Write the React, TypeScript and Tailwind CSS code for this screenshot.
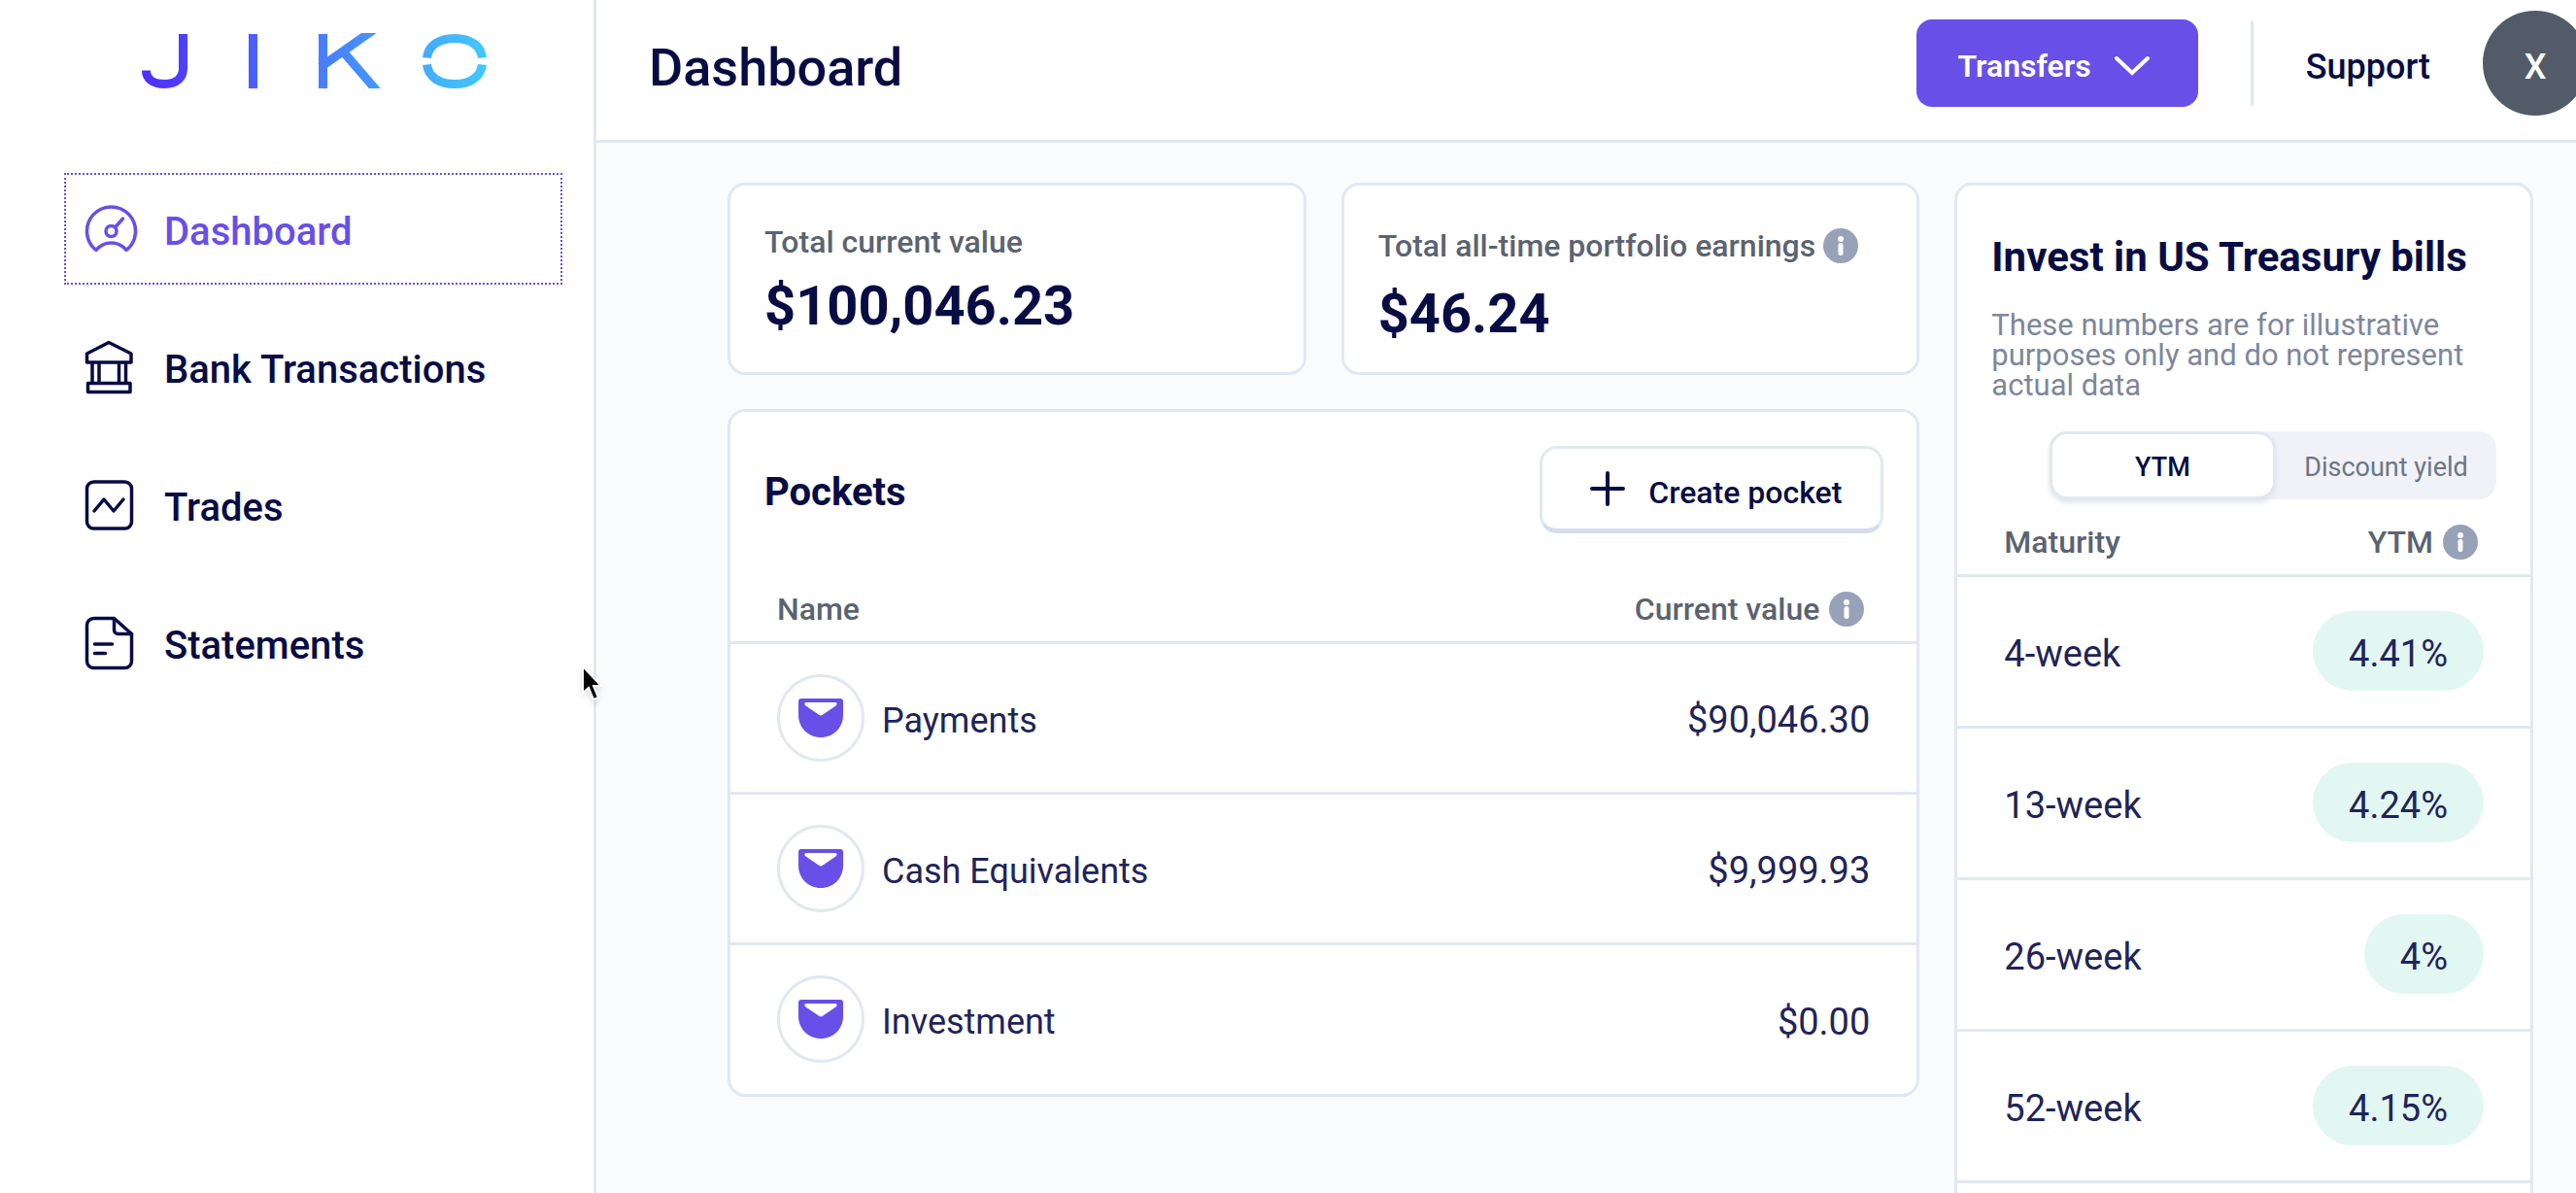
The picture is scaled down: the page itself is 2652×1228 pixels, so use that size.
import React, { useState } from 'react';
import clsx from 'clsx';

interface IconProps {
  className?: string;
}

interface NavItem {
  label: string;
  icon: React.FC<IconProps>;
}

const JikoLogo: React.FC<IconProps> = ({ className }) => (
  <svg viewBox="0 0 356 57" fill="none" className={className} role="img" aria-label="Jiko">
    <defs>
      <linearGradient id="jiko" x1="0" y1="0" x2="356" y2="0" gradientUnits="userSpaceOnUse">
        <stop stopColor="#4f2dff" />
        <stop offset="1" stopColor="#42c8ff" />
      </linearGradient>
    </defs>
    <g stroke="url(#jiko)" strokeWidth="9">
      <path d="M42.5 1v35c0 10.5-7 16.5-19 16.5S4.5 47 4.5 38.5" />
      <path d="M114.5 1v56" />
      <path d="M186.5 1v56M184 35 241-5M208 20l37 43" />
      <path d="M293.5 25.5C295 13 306 5.5 322 5.5S349 13 350.5 25.5M293.5 32.5C295 45 306 52.5 322 52.5S349 45 350.5 32.5" />
    </g>
  </svg>
);

const GaugeIcon: React.FC<IconProps> = ({ className }) => (
  <svg viewBox="0 0 56 56" fill="none" stroke="currentColor" strokeWidth="3.5" strokeLinecap="round" strokeLinejoin="round" className={className}>
    <path d="M13 49.5A25 25 0 1 1 44 49.5C40 44.5 34.5 42 28.5 42S17 44.5 13 49.5Z" />
    <circle cx="28.5" cy="30" r="5.5" />
    <path d="m32.5 26 8-9" />
  </svg>
);

const BankIcon: React.FC<IconProps> = ({ className }) => (
  <svg viewBox="0 0 56 56" fill="none" stroke="currentColor" strokeWidth="3.5" strokeLinejoin="round" className={className}>
    <path d="M3.5 14 26 2.5 49 14v9H3.5zM4.500 44.5H48v9H4.5zM9 23v21M16 23v21M36.5 23v21M43.5 23v21" />
  </svg>
);

const TradesIcon: React.FC<IconProps> = ({ className }) => (
  <svg viewBox="0 0 56 56" fill="none" stroke="currentColor" strokeWidth="3.5" strokeLinecap="round" strokeLinejoin="round" className={className}>
    <rect x="3.5" y="4" width="46" height="48" rx="7" />
    <path d="m11 34 10-12 10 12 10-12" />
  </svg>
);

const StatementIcon: React.FC<IconProps> = ({ className }) => (
  <svg viewBox="0 0 56 56" fill="none" stroke="currentColor" strokeWidth="3.5" strokeLinecap="round" strokeLinejoin="round" className={className}>
    <path d="M10.5 2.5h21l18 16v28a7 7 0 0 1-7 7h-32a7 7 0 0 1-7-7v-37a7 7 0 0 1 7-7Z" />
    <path d="M31.5 2.5v12a4 4 0 0 0 4 4h14M11.5 29h18M11.5 38.5h11" />
  </svg>
);

const PocketIcon: React.FC<IconProps> = ({ className }) => (
  <svg viewBox="0 0 46 40" className={className}>
    <path fill="#684fe8" d="M3 0h40a3 3 0 0 1 3 3v14c0 13-10 23-23 23S0 30 0 17V3a3 3 0 0 1 3-3Z" />
    <path fill="#fff" d="M8 4h30c2 0 2 2.5.5 3.5L24.5 17a3 3 0 0 1-3 0L7.5 7.5C6 6.5 6 4 8 4Z" />
  </svg>
);

const InfoButton = ({ label }: { label: string }) => (
  <button type="button" aria-label={label} className="shrink-0">
    <svg viewBox="0 0 36 36" className="size-9">
      <circle cx="18" cy="18" r="18" fill="#97a1b7" />
      <circle cx="18" cy="11" r="3" fill="#fff" />
      <path d="M18 17.5v8" stroke="#fff" strokeWidth="5" strokeLinecap="round" />
    </svg>
  </button>
);

const navItems: NavItem[] = [
  { label: 'Dashboard', icon: GaugeIcon },
  { label: 'Bank Transactions', icon: BankIcon },
  { label: 'Trades', icon: TradesIcon },
  { label: 'Statements', icon: StatementIcon },
];

const pockets = [
  { name: 'Payments', value: '$90,046.30' },
  { name: 'Cash Equivalents', value: '$9,999.93' },
  { name: 'Investment', value: '$0.00' },
];

const bills = [
  { maturity: '4-week', rate: '4.41%' },
  { maturity: '13-week', rate: '4.24%' },
  { maturity: '26-week', rate: '4%' },
  { maturity: '52-week', rate: '4.15%' },
];

const cardClass = 'rounded-[18px] border-3 border-[#e2e8f0] bg-white';

const Sidebar = () => (
  <aside className="w-[614px] shrink-0 border-r-3 border-[#e2e8f0] bg-white pt-[34px] pr-8 pl-[66px]">
    <JikoLogo className="ml-20 h-[57px] w-[356px]" />
    <nav className="mt-[87px] flex flex-col gap-[27px]">
      {navItems.map(({ label, icon: Icon }, index) => (
        <a
          key={label}
          href="#"
          aria-current={index === 0 ? 'page' : undefined}
          className={clsx(
            'flex h-[115px] items-center gap-[27px] border-2 border-dotted pl-[18px] text-[40px] font-medium',
            index === 0 ? 'border-[#684fe8] text-[#684fe8]' : 'border-transparent text-[#080c44]'
          )}
        >
          <Icon className="size-14 shrink-0" />
          <span className="pt-1.5">{label}</span>
        </a>
      ))}
    </nav>
  </aside>
);

const Header = () => (
  <header className="flex h-[147px] items-center justify-between overflow-hidden border-b-3 border-[#e2e8f0] bg-white pb-3.5 pl-[54px]">
    <h1 className="pt-2 text-[54px] font-medium">Dashboard</h1>
    <div className="-mr-3 flex items-center">
      <button
        type="button"
        className="flex h-[90px] items-center gap-6 rounded-2xl bg-[#684fe8] pt-1.5 pr-[50px] pl-[42px] text-[32px] font-semibold text-white"
      >
        Transfers
        <svg viewBox="0 0 36 20" fill="none" className="h-5 w-9">
          <path d="m2 2 16 15L34 2" stroke="#fff" strokeWidth="4" strokeLinecap="round" />
        </svg>
      </button>
      <div className="ml-[54px] h-[88px] w-[3px] bg-[#e2e8f0]" />
      <a href="#" className="ml-[54px] pt-2 text-[36px] font-medium">
        Support
      </a>
      <button
        type="button"
        aria-label="Account"
        className="ml-[54px] flex size-[108px] items-center justify-center rounded-full bg-[#545b68] pt-2 text-[36px] font-medium text-white"
      >
        X
      </button>
    </div>
  </header>
);

const PocketsCard = () => (
  <section className={clsx(cardClass, 'col-span-2')}>
    <div className="flex items-center justify-between pt-[35px] pr-[34px] pl-[35px]">
      <h2 className="pt-1.5 text-[40px] font-bold">Pockets</h2>
      <button
        type="button"
        className="flex h-[90px] items-center gap-6 rounded-[18px] border-3 border-b-5 border-[#e2e8f0] border-b-[#d5dceb] pr-10 pl-[49px] text-[32px] font-medium"
      >
        <svg viewBox="0 0 36 36" className="size-9">
          <path d="M18 2v32M2 18h32" stroke="currentColor" strokeWidth="4" strokeLinecap="round" />
        </svg>
        <span className="pt-2">Create pocket</span>
      </button>
    </div>
    <table className="mt-10 w-full text-left">
      <thead className="text-[32px] text-[#5b6371]">
        <tr className="h-[72px] border-b-3 border-[#e2e8f0]">
          <th className="pt-1.5 pl-12 font-medium">Name</th>
          <th className="pt-1.5 pr-[54px] font-medium">
            <div className="flex items-center justify-end gap-2.5">
              Current value
              <InfoButton label="About current value" />
            </div>
          </th>
        </tr>
      </thead>
      <tbody className="text-[36px] text-[#1f2459]">
        {pockets.map((pocket) => (
          <tr key={pocket.name} className="h-[155px] border-b-3 border-[#e2e8f0] last:border-b-0">
            <td className="pl-12">
              <div className="flex items-center gap-[18px]">
                <span className="flex size-[90px] items-center justify-center rounded-full border-3 border-[#e2e8f0]">
                  <PocketIcon className="h-10 w-[46px]" />
                </span>
                <span className="pt-1.5">{pocket.name}</span>
              </div>
            </td>
            <td className="pt-1.5 pr-12 text-right text-[38px]">{pocket.value}</td>
          </tr>
        ))}
      </tbody>
    </table>
  </section>
);

const TreasuryCard = () => {
  const [mode, setMode] = useState('YTM');

  return (
    <section className={clsx(cardClass, 'row-span-2 pb-9')}>
      <div className="px-[35px] pt-12">
        <h2 className="text-[42px] leading-[52px] font-bold">Invest in US Treasury bills</h2>
        <p className="mt-7 text-[31px] leading-[31px] text-[#7e879b]">
          These numbers are for illustrative purposes only and do not represent actual data
        </p>
        <div className="mt-8 ml-auto flex h-[70px] w-[460px] rounded-[18px] bg-[#f0f2f8] text-[27px] text-[#6d7584]">
          {['YTM', 'Discount yield'].map((option) => (
            <button
              key={option}
              type="button"
              aria-pressed={mode === option}
              onClick={() => setMode(option)}
              className={clsx(
                'flex-1 rounded-[18px] pt-1',
                mode === option && 'border-3 border-[#e2e8f0] bg-white font-medium text-[#080c44] shadow-md shadow-[#dde3ef]'
              )}
            >
              {option}
            </button>
          ))}
        </div>
      </div>
      <table className="mt-2 w-full text-left">
        <thead className="text-[32px] text-[#5b6371]">
          <tr className="h-[70px] border-b-3 border-[#e2e8f0]">
            <th className="pt-1 pl-12 font-medium">Maturity</th>
            <th className="pt-1 pr-[54px] font-medium">
              <div className="flex items-center justify-end gap-2.5">
                {mode}
                <InfoButton label="About yield to maturity" />
              </div>
            </th>
          </tr>
        </thead>
        <tbody className="text-[38px] text-[#1f2459]">
          {bills.map((bill) => (
            <tr key={bill.maturity} className="h-[156px] border-b-3 border-[#e2e8f0]">
              <td className="pt-1.5 pl-12">{bill.maturity}</td>
              <td className="pr-12 text-right">
                <span className="inline-flex h-[82px] items-center rounded-full bg-[#e3f7f2] px-[37px] pt-1.5">{bill.rate}</span>
              </td>
            </tr>
          ))}
        </tbody>
      </table>
    </section>
  );
};

export default function App() {
  return (
    <div className="relative flex h-screen overflow-hidden bg-[#fafbfd] font-[Roboto,'Noto_Sans',sans-serif] text-[#080c44]">
      <Sidebar />
      <div className="min-w-0 flex-1">
        <Header />
        <main className="grid grid-cols-3 grid-rows-[auto_1fr] items-start gap-x-9 gap-y-[35px] pt-[41px] pr-11 pl-[135px]">
          <section className={clsx(cardClass, 'self-stretch px-[35px] pt-9 pb-6')}>
            <h2 className="text-[32px] leading-[44px] font-medium text-[#5b6371]">Total current value</h2>
            <p className="mt-2 text-[56px] leading-[72px] font-bold">$100,046.23</p>
          </section>
          <section className={clsx(cardClass, 'self-stretch px-[35px] pt-9 pb-6')}>
            <h2 className="flex h-[52px] items-center gap-2 text-[32px] font-medium whitespace-nowrap text-[#5b6371]">
              Total all-time portfolio earnings
              <InfoButton label="About portfolio earnings" />
            </h2>
            <p className="mt-2 text-[56px] leading-[72px] font-bold">$46.24</p>
          </section>
          <TreasuryCard />
          <PocketsCard />
        </main>
      </div>

      {/* mouse pointer */}
      <svg viewBox="0 0 24 38" className="absolute top-[684px] left-[598px] h-[38px] w-6 drop-shadow-md">
        <path d="M2 2v27l6-5 5 12 5-2-5-12h8Z" fill="#000" stroke="#fff" strokeWidth="2" />
      </svg>
    </div>
  );
}
